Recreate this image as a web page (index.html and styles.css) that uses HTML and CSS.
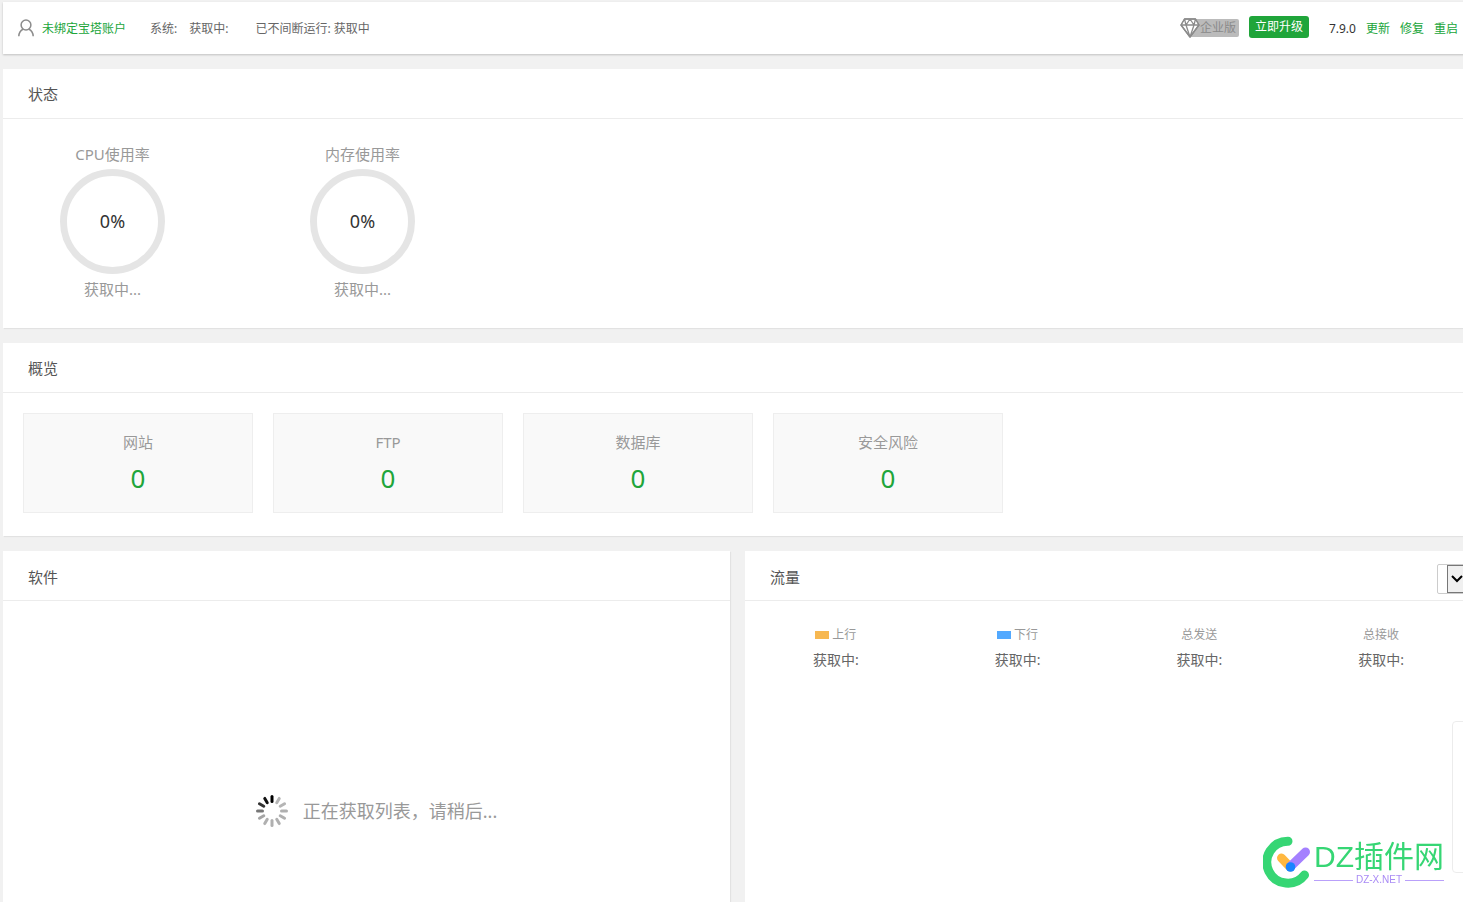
FILE: index.html
```
<!DOCTYPE html>
<html lang="zh-CN">
<head>
    <meta charset="UTF-8">
    <meta name="viewport" content="width=device-width, initial-scale=1.0">
    <title>宝塔面板</title>
    <link rel="stylesheet" href="styles.css">
</head>
<body>
    <div class="main">
        <header class="topbar">
            <svg class="user-icon" viewBox="0 0 16 18" width="16" height="18">
                <circle cx="8" cy="6" r="4.9"/>
                <path d="M0.8 17.2C1 13.6 2.6 11.3 5 10.2M11 10.2c2.400 1.100 4 3.400 4.200 7"/>
            </svg>
            <a class="account" href="#">未绑定宝塔账户</a>
            <span class="sys-label">系统:</span>
            <span class="sys-value">获取中:</span>
            <span class="uptime">已不间断运行: 获取中</span>
            <div class="version">
                <div class="edition">
                    <svg class="diamond" viewBox="0 0 20 20" width="20" height="20">
                        <path class="fill" d="M4.500 1h11L19 7l-9 12L1 7z"/>
                        <path d="M4.500 1h11L19 7l-9 12L1 7zM1 7h18M6 7l4 12 4-12M4.500 1L6 7l4-6 4 6 1.500-6"/>
                    </svg>
                    <span class="edition-name">企业版</span>
                </div>
                <button class="btn-upgrade" type="button">立即升级</button>
                <span class="number">7.9.0</span>
                <a href="#">更新</a>
                <a href="#">修复</a>
                <a href="#">重启</a>
            </div>
        </header>

        <section class="panel">
            <h3 class="title">状态</h3>
            <div class="status-list">
                <div class="status-item">
                    <p>CPU使用率</p>
                    <div class="ring">0%</div>
                    <p>获取中...</p>
                </div>
                <div class="status-item">
                    <p>内存使用率</p>
                    <div class="ring">0%</div>
                    <p>获取中...</p>
                </div>
            </div>
        </section>

        <section class="panel">
            <h3 class="title">概览</h3>
            <div class="overview">
                <div class="card"><p>网站</p><a href="#">0</a></div>
                <div class="card"><p>FTP</p><a href="#">0</a></div>
                <div class="card"><p>数据库</p><a href="#">0</a></div>
                <div class="card"><p>安全风险</p><a href="#">0</a></div>
            </div>
        </section>

        <div class="columns">
            <section class="panel">
                <h3 class="title">软件</h3>
                <div class="loading">
                    <svg class="spinner" viewBox="-16 -16 32 32" width="32" height="32">
                        <line y1="-9.500" y2="-14.500" stroke="#000"/>
                        <line y1="-9.500" y2="-14.500" stroke="#b5b5b5" transform="rotate(30)"/>
                        <line y1="-9.500" y2="-14.500" stroke="#b5b5b5" transform="rotate(60)"/>
                        <line y1="-9.500" y2="-14.500" stroke="#b0b0b0" transform="rotate(90)"/>
                        <line y1="-9.500" y2="-14.500" stroke="#b0b0b0" transform="rotate(120)"/>
                        <line y1="-9.500" y2="-14.500" stroke="#b0b0b0" transform="rotate(150)"/>
                        <line y1="-9.500" y2="-14.500" stroke="#b0b0b0" transform="rotate(180)"/>
                        <line y1="-9.500" y2="-14.500" stroke="#b0b0b0" transform="rotate(210)"/>
                        <line y1="-9.500" y2="-14.500" stroke="#a5a5a5" transform="rotate(240)"/>
                        <line y1="-9.500" y2="-14.500" stroke="#777" transform="rotate(270)"/>
                        <line y1="-9.500" y2="-14.500" stroke="#333" transform="rotate(300)"/>
                        <line y1="-9.500" y2="-14.500" stroke="#111" transform="rotate(330)"/>
                    </svg>
                    <span>正在获取列表，请稍后...</span>
                </div>
            </section>
            <section class="panel">
                <div class="title">
                    <h3>流量</h3>
                    <div class="select-box">
                        <select aria-label="网卡"></select>
                        <span class="arrow">
                            <svg viewBox="0 0 12 8" width="12" height="8"><path d="M1 1l5 5 5-5"/></svg>
                        </span>
                    </div>
                </div>
                <div class="traffic">
                    <div><p><i class="up"></i>上行</p><b>获取中:</b></div>
                    <div><p><i class="down"></i>下行</p><b>获取中:</b></div>
                    <div><p>总发送</p><b>获取中:</b></div>
                    <div><p>总接收</p><b>获取中:</b></div>
                </div>
            </section>
        </div>
    </div>

    <div class="side-box"></div>

    <div class="brand">
        <svg viewBox="0 0 48 52" width="48" height="52">
            <path d="M25 5.200A21 21 0 1 0 41.500 39" fill="none" stroke="#36d674" stroke-width="9" stroke-linecap="round"/>
            <path d="M18.500 22l8.500 9" stroke="#ffb840" stroke-width="9" stroke-linecap="round"/>
            <path d="M27.500 30.500L42.500 16" stroke="#a480ff" stroke-width="9" stroke-linecap="round"/>
            <circle cx="27.500" cy="31" r="4.800" fill="#1784ff"/>
        </svg>
        <div>
            <div class="brand-name">DZ插件网</div>
            <div class="brand-site">DZ-X.NET</div>
        </div>
    </div>
</body>
</html>
```
FILE: styles.css
```
* {
    box-sizing: border-box;
}
body {
    margin: 0;
    background-color: #f1f1f1;
    color: #666;
    font-family: "Noto Sans", "Noto Sans CJK SC", sans-serif;
    font-size: 12px;
    line-height: 20px;
    overflow: hidden;
}
p, h3 {
    margin: 0;
    font-weight: normal;
}
a {
    color: #20a53a;
    text-decoration: none;
}
a:hover {
    text-decoration: underline;
}
/* the panels run a little past the right edge of the window */
.main {
    display: flex;
    flex-direction: column;
    gap: 15px;
    min-height: 100vh;
    margin-right: -9px;
    padding: 2px 0 0 3px;
}
.topbar {
    display: flex;
    align-items: center;
    height: 52px;
    padding: 0 14px 0 15px;
    background-color: #fff;
    box-shadow: 0 1px 2px rgba(0, 0, 0, 0.2);
    line-height: 22px;
}
.topbar > a,
.topbar > span,
.version > a,
.number {
    padding-top: 2px;
}
.user-icon {
    margin-right: 8px;
    fill: none;
    stroke: #8c8c8c;
    stroke-width: 1.5;
}
.sys-label {
    margin-left: 24px;
}
.sys-value {
    margin-left: 12px;
}
.uptime {
    margin-left: 27px;
}
.version {
    display: flex;
    align-items: center;
    gap: 10px;
    margin-left: auto;
}
.edition {
    display: flex;
    align-items: center;
}
.diamond {
    position: relative;
    fill: none;
    stroke: #8c8c8c;
    stroke-width: 1.3;
    stroke-linejoin: round;
}
.diamond .fill {
    fill: #fff;
}
.edition-name {
    height: 18px;
    margin-left: -10px;
    padding: 0 3px 0 10px;
    border-radius: 2px;
    background-color: #bbb;
    color: #8a8a8a;
    line-height: 18px;
}
.btn-upgrade {
    height: 22px;
    margin-bottom: 2px;
    padding: 0 6px;
    border: none;
    border-radius: 3px;
    background-color: #20a53a;
    color: #fff;
    font-family: inherit;
    font-size: 12px;
    line-height: 22px;
    cursor: pointer;
}
.btn-upgrade:hover {
    background-color: #10952a;
}
.number {
    margin-left: 10px;
    color: #333;
}
.panel {
    background-color: #fff;
    box-shadow: 1px 1px 1px rgba(0, 0, 0, 0.06);
}
.title {
    display: flex;
    align-items: center;
    justify-content: space-between;
    height: 50px;
    padding: 0 5px 0 25px;
    border-bottom: 1px solid #ececec;
    color: #555;
    font-size: 15px;
}
.title h3 {
    font-size: 15px;
}
.columns .title {
    padding-top: 2px;
}
.status-list {
    display: flex;
    gap: 70px;
    padding: 20px 20px 24px;
}
.status-item {
    width: 179px;
    margin-right: 1px;
    color: #999;
    font-size: 15px;
    line-height: 30px;
    text-align: center;
}
.ring {
    display: flex;
    align-items: center;
    justify-content: center;
    width: 105px;
    height: 105px;
    margin: 0 auto;
    padding-bottom: 2px;
    border: 7px solid #e5e5e5;
    border-radius: 50%;
    color: #333;
    font-size: 18px;
}
.overview {
    display: flex;
    gap: 20px;
    padding: 20px 20px 23px;
}
.card {
    width: 230px;
    height: 100px;
    padding-top: 18px;
    border: 1px solid #eee;
    background-color: #f9f9f9;
    color: #999;
    font-size: 15px;
    text-align: center;
}
.card a {
    display: block;
    margin-top: 11px;
    font-size: 26px;
    line-height: 30px;
}
.columns {
    display: grid;
    grid-template-columns: 1fr 1fr;
    gap: 15px;
    flex: 1;
}
.loading {
    display: flex;
    align-items: center;
    justify-content: center;
    gap: 15px;
    padding: 194px 0 60px 20px;
    color: #999;
    font-family: "Noto Sans", "Noto Sans CJK SC", sans-serif;
    font-size: 18px;
}
.spinner {
    stroke-width: 3;
    stroke-linecap: round;
}
.select-box {
    position: relative;
    height: 30px;
    margin-top: 4px;
}
.select-box select {
    width: 30px;
    height: 30px;
    border: 1px solid #ccc;
    border-radius: 2px;
    background-color: #fff;
    appearance: none;
}
.arrow {
    position: absolute;
    top: 1px;
    right: 1px;
    display: flex;
    align-items: center;
    justify-content: center;
    width: 19px;
    height: 28px;
    border: 1px solid #777;
    background-color: #f0f0f0;
    pointer-events: none;
}
.arrow path {
    fill: none;
    stroke: #000;
    stroke-width: 2;
}
.traffic {
    display: grid;
    grid-template-columns: repeat(4, 1fr);
    padding-top: 24px;
    text-align: center;
}
.traffic p {
    display: flex;
    align-items: center;
    justify-content: center;
    gap: 3px;
    margin-bottom: 5px;
    color: #999;
}
.traffic b {
    display: block;
    font-size: 14px;
    font-weight: normal;
}
.traffic i {
    width: 14px;
    height: 8px;
}
.up {
    background-color: #f7b851;
}
.down {
    background-color: #52a9ff;
}
.side-box {
    position: fixed;
    right: -50px;
    bottom: 29px;
    width: 61px;
    height: 152px;
    border: 1px solid #ececec;
    border-radius: 4px;
    background-color: #fff;
}
.brand {
    position: fixed;
    right: 19px;
    bottom: 14px;
    display: flex;
    gap: 3px;
    font-family: "Liberation Sans", "Noto Sans CJK SC", sans-serif;
}
.brand-name {
    margin-top: 4px;
    color: #36d674;
    font-size: 30px;
    line-height: 34px;
}
.brand-site {
    display: flex;
    align-items: center;
    gap: 3px;
    color: #a98bf5;
    font-size: 10px;
    line-height: 12px;
}
.brand-site::before,
.brand-site::after {
    content: "";
    flex: 1;
    height: 1px;
    background-color: #b9a0fa;
}
```
